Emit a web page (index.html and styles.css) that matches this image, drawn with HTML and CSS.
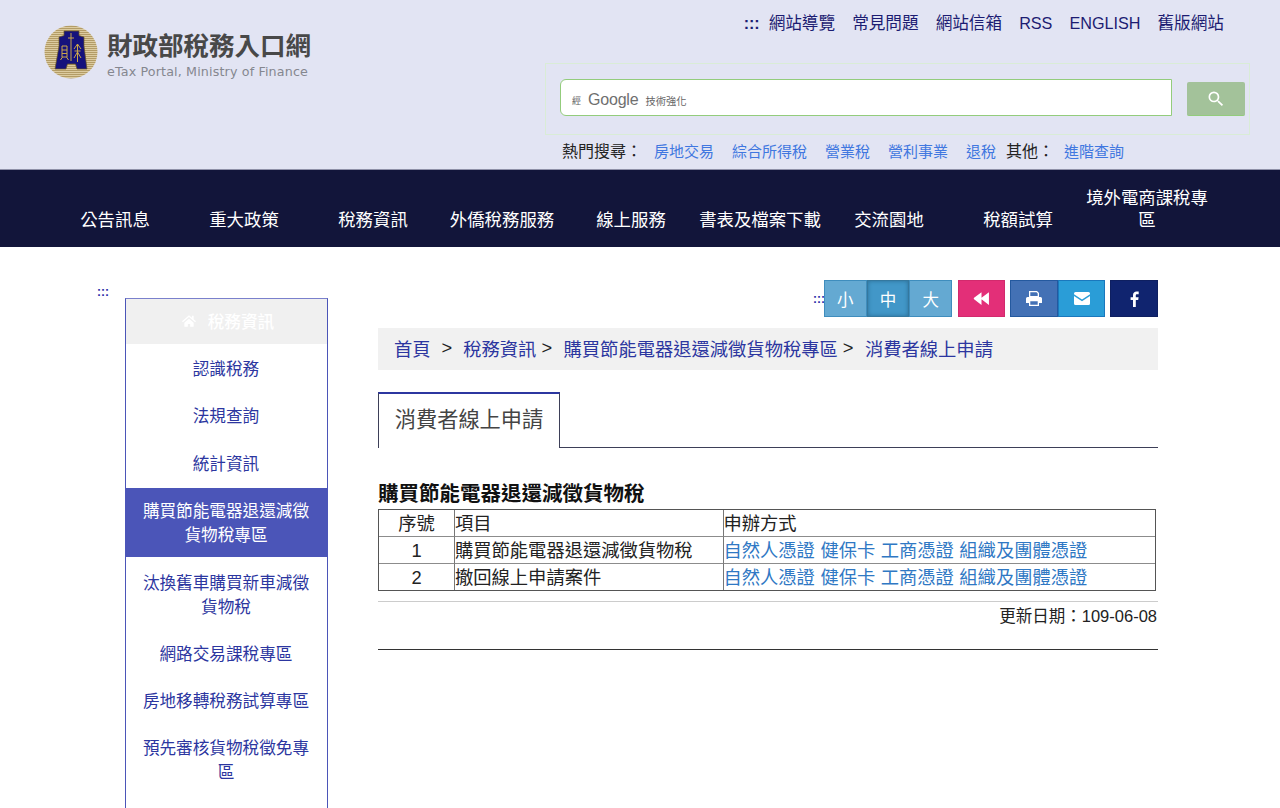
FILE: index.html
```html
<!DOCTYPE html>
<html lang="zh-Hant">
<head>
<meta charset="utf-8">
<title>消費者線上申請</title>
<link rel="stylesheet" href="styles.css">
</head>
<body>
<header class="header">
  <a class="logo" href="#">
    <svg class="seal" viewBox="0 0 54 54" width="54" height="54" aria-hidden="true">
      <defs>
        <pattern id="stripes" width="2" height="2" patternUnits="userSpaceOnUse">
          <rect width="2" height="1" fill="#dccb9f"/><rect y="1" width="2" height="1" fill="#b39c66"/>
        </pattern>
      </defs>
      <circle cx="27" cy="27" r="26.5" fill="url(#stripes)"/>
      <path d="M20 6H35V10.500L38 11.500 40 12V21L43 44H33L31.500 39H23.500L22 44H11L15 21V12L20 10.500Z" fill="#15127c" stroke="#6e5a24" stroke-width=".7"/>
      <path d="M27 8V36M24 13H30M18 21H23V32H18ZM18 25H23M18 28.500H23M18.500 32L16.500 35M22.500 32L24.500 35M33.500 19V37M33.500 19L30 24M33.500 19L37 24M30.500 26H36.500M33.500 27L30 33M33.500 27L37 33" fill="none" stroke="#cba64a" stroke-width="1"/>
    </svg>
    <span class="logo-text">
      <span class="logo-title">財政部稅務入口網</span>
      <span class="logo-sub">eTax Portal, Ministry of Finance</span>
    </span>
  </a>
  <div class="header-right">
    <nav class="top-links">
      <span class="marker">:::</span>
      <a href="#">網站導覽</a><a href="#">常見問題</a><a href="#">網站信箱</a><a class="latin" href="#">RSS</a><a class="latin" href="#">ENGLISH</a><a href="#">舊版網站</a>
    </nav>
    <form class="search">
      <div class="search-input">
        <span class="by">經</span><span class="google">Google</span><span class="by wide">技術強化</span>
      </div>
      <button class="search-btn" type="button" aria-label="搜尋">
        <svg viewBox="0 0 24 24" width="20" height="20"><path fill="#fff" d="M15.500 14h-.79l-.28-.27A6.470 6.470 0 0 0 16 9.500 6.500 6.500 0 1 0 9.500 16c1.610 0 3.090-.59 4.230-1.570l.27.28v.79l5 4.990L20.490 19l-4.990-5zm-6 0C7.010 14 5 11.990 5 9.500S7.010 5 9.500 5 14 7.010 14 9.500 11.990 14 9.500 14z"/></svg>
      </button>
    </form>
    <div class="hot">
      <span class="hot-label">熱門搜尋：</span>
      <a href="#">房地交易</a><a href="#">綜合所得稅</a><a href="#">營業稅</a><a href="#">營利事業</a><a href="#">退稅</a>
      <span class="hot-label other">其他：</span>
      <a href="#">進階查詢</a>
    </div>
  </div>
</header>

<nav class="main-nav">
  <a href="#">公告訊息</a><a href="#">重大政策</a><a href="#">稅務資訊</a><a href="#">外僑稅務服務</a><a href="#">線上服務</a><a href="#">書表及檔案下載</a><a href="#">交流園地</a><a href="#">稅額試算</a><a href="#">境外電商課稅專區</a>
</nav>

<main class="page">
  <span class="side-marker">:::</span>
  <aside class="sidebar">
    <h2 class="side-title">
      <svg viewBox="0 0 24 20" width="14" height="12" aria-hidden="true"><path fill="#fff" d="M12 0 0 10.500l1.500 1.700L12 3l10.500 9.200 1.500-1.700-4-3.500V1h-3v3.400zM4 13v7h6v-5h4v5h6v-7l-8-7z"/></svg>
      稅務資訊
    </h2>
    <a href="#">認識稅務</a>
    <a href="#">法規查詢</a>
    <a href="#">統計資訊</a>
    <a href="#" class="active">購買節能電器退還減徵貨物稅專區</a>
    <a href="#">汰換舊車購買新車減徵貨物稅</a>
    <a href="#">網路交易課稅專區</a>
    <a href="#">房地移轉稅務試算專區</a>
    <a href="#">預先審核貨物稅徵免專區</a>
  </aside>

  <section class="content">
    <div class="tools">
      <span class="tools-marker">:::</span>
      <div class="btn-group">
        <button class="tool size" type="button">小</button><button class="tool size on" type="button">中</button><button class="tool size" type="button">大</button>
      </div>
      <button class="tool back" type="button" aria-label="回上頁">
        <svg viewBox="0 0 16 14" width="17" height="15"><path fill="#fff" d="M8 1v12L1 7.600a.8.8 0 0 1 0-1.200zM15 1v12L8 7.600a.8.8 0 0 1 0-1.200z"/></svg>
      </button>
      <div class="btn-group">
        <button class="tool print" type="button" aria-label="列印">
          <svg viewBox="0 0 16 15" width="16" height="15"><path fill="#fff" fill-rule="evenodd" d="M3 0h8l2 2v4H3zM4.300 1.300v3.600h7.400V2.600l-1.200-1.300zM1.500 6h13A1.500 1.500 0 0 1 16 7.500V12h-3v3H3v-3H0V7.500A1.500 1.500 0 0 1 1.500 6zM4.300 10.300v3.500h7.400v-3.500z"/></svg>
        </button><button class="tool mail" type="button" aria-label="寄信">
          <svg viewBox="0 0 16 13" width="16" height="13"><path fill="#fff" d="M1.500 0h13A1.500 1.500 0 0 1 16 1.500v.8L8 7.500 0 2.300v-.8A1.500 1.500 0 0 1 1.500 0zM0 4l8 5.200L16 4v7.500a1.500 1.500 0 0 1-1.500 1.500h-13A1.500 1.500 0 0 1 0 11.500z"/></svg>
        </button>
      </div>
      <button class="tool fb" type="button" aria-label="Facebook">
        <svg viewBox="0 0 9 16" width="9" height="16"><path fill="#fff" d="M5.800 16V9h2.400l.4-2.800H5.800V4.500c0-.8.200-1.300 1.400-1.300h1.500V.6C8.400.6 7.600.5 6.600.5 4.500.5 3 1.800 3 4.200v2H.6V9H3v7z"/></svg>
      </button>
    </div>

    <nav class="crumbs">
      <a href="#">首頁</a><span class="sep first">&gt;</span><a href="#">稅務資訊</a><span class="sep">&gt;</span><a href="#">購買節能電器退還減徵貨物稅專區</a><span class="sep">&gt;</span><a href="#">消費者線上申請</a>
    </nav>

    <div class="tabs"><h1 class="tab">消費者線上申請</h1></div>

    <h3 class="doc-title">購買節能電器退還減徵貨物稅</h3>
    <table class="doc-table">
      <colgroup><col class="c1"><col class="c2"><col class="c3"></colgroup>
      <tr><td class="num">序號</td><td>項目</td><td>申辦方式</td></tr>
      <tr><td class="num">1</td><td>購買節能電器退還減徵貨物稅</td><td class="ways"><a href="#">自然人憑證</a> <a href="#">健保卡</a> <a href="#">工商憑證</a> <a href="#">組織及團體憑證</a></td></tr>
      <tr><td class="num">2</td><td>撤回線上申請案件</td><td class="ways"><a href="#">自然人憑證</a> <a href="#">健保卡</a> <a href="#">工商憑證</a> <a href="#">組織及團體憑證</a></td></tr>
    </table>
    <p class="updated">更新日期：109-06-08</p>
  </section>
</main>
</body>
</html>
```

FILE: styles.css
```css
* { box-sizing: border-box; }
html, body { margin: 0; height: 808px; overflow: hidden; }
body {
  background: #fff;
  color: #222;
  font-family: "Liberation Sans", "Noto Sans CJK TC", sans-serif;
}
a { text-decoration: none; color: inherit; }
h1, h2, h3, p { margin: 0; font: inherit; }

.header {
  height: 170px;
  background: #e2e4f3;
  display: flex;
  justify-content: space-between;
  border-bottom: 1px solid #8f91a8;
}
.logo { display: flex; align-items: flex-start; gap: 9px; margin: 25px 0 0 44px; height: 55px; }
.logo-text { display: flex; flex-direction: column; margin-top: 6px; }
.logo-title { font-size: 25.500px; line-height: 30px; font-weight: 700; color: #484848; white-space: nowrap; }
.logo-sub { font-family: "DejaVu Sans", sans-serif; font-size: 12.700px; line-height: 15px; margin-top: 3px; color: #85878f; letter-spacing: .14px; white-space: nowrap; }

.header-right { width: 720px; display: flex; flex-direction: column; }
.top-links {
  display: flex; justify-content: flex-end; align-items: center; gap: 17px;
  color: #1c1c72; font-size: 16.640px; line-height: 24px;
  margin: 12px 56px 0 0;
}
.top-links .latin { font-size: 16.200px; margin-top: -2px; }
.marker { margin-right: -8px; font-size: 16px; font-weight: 700; }
.search {
  display: flex; align-items: flex-end; gap: 15px;
  width: 705px; height: 72px;
  margin: 27px 0 0 -15px;
  padding: 15px 0 18px 14px;
  border: 1px solid #d9ecd6;
}
.search-input {
  width: 612px; height: 37px; flex: none;
  background: #fff;
  border: 1px solid #93cc7c;
  border-radius: 6px 0 0 6px;
  display: flex; align-items: center; gap: 7px;
  padding: 5px 0 0 11px;
  color: #666;
}
.by { font-size: 9px; }
.by.wide { font-size: 10.300px; }
.google { font-size: 16px; color: #6f6f6f; letter-spacing: -.2px; }
.search-btn {
  width: 58px; height: 34px; padding: 0; flex: none;
  background: #a3c29a;
  border: 0; border-bottom: 1px solid #93cc7c;
  border-radius: 2px;
  display: flex; align-items: center; justify-content: center;
}
.hot {
  display: flex; align-items: center; gap: 18px;
  font-size: 15px; line-height: 22px; color: #4077e0;
  margin: 6px 0 0 2px;
}
.hot-label { color: #222; font-size: 16px; margin-right: -6px; }
.hot-label.other { margin-left: -8px; margin-right: -8px; }

.main-nav {
  height: 77px;
  background: #12153a;
  display: grid;
  grid-template-columns: repeat(9, 129px);
  padding: 0 0 16px 50.500px;
  align-items: end;
}
.main-nav a {
  color: #fff; font-size: 17.400px; line-height: 22px; text-align: center; padding: 0 3px;
}

.page { position: relative; display: flex; padding: 33px 0 0 125px; gap: 50px; align-items: flex-start; }
.side-marker { position: absolute; left: 97px; top: 38px; color: #2a2fa8; font-size: 12px; line-height: 14px; font-weight: 700; }

.sidebar {
  width: 203px; flex: none; min-height: 520px;
  margin-top: 18px;
  border: 1px solid #4b55b8;
  border-top-color: #7a80cc;
  border-bottom: 0;
  display: flex; flex-direction: column;
}
.side-title {
  height: 45px; background: #f0f0f0; color: #fff; font-size: 16.640px; font-weight: 500;
  padding: 0 0 2px 3px;
  display: flex; align-items: center; justify-content: center; gap: 12px;
}
.sidebar a {
  padding: 14px 17px 9.300px 16px; font-size: 16.640px; line-height: 24px; text-align: center; color: #2c36a0;
}
.sidebar a.active { background: #4b55b8; color: #fff; margin-top: 2px; padding-top: 12.500px; padding-bottom: 8.500px; }
.sidebar a.active ~ a { padding-bottom: 9px; }
.sidebar a.active + a { padding-top: 15px; }

.content { width: 780px; flex: none; }
.tools { display: flex; justify-content: flex-end; align-items: center; gap: 5px; height: 37px; }
.tools-marker { color: #2a2fa8; font-size: 12px; font-weight: 700; margin-right: -6px; }
.btn-group { display: flex; }
.tool {
  width: 42.670px; height: 37px; padding: 0;
  display: flex; align-items: center; justify-content: center;
  color: #fff; font-size: 16.500px;
  border: 1px solid #3f8dbd;
  font-family: inherit;
}
.size { background: #64a9d2; }
.size.on { background: #4297c8; border-color: #34789f; box-shadow: inset 0 0 4px #2c6f97; }
.back { width: 47px; margin-left: 1px; background: #e32f78; border-color: #d22a6d; }
.print { width: 48px; background: #4371b5; border-color: #24599f; }
.mail { width: 47px; background: #2a9dd7; border-color: #1a78bd; }
.fb { width: 48px; background: #10246f; border-color: #0e1f60; }

.crumbs {
  margin-top: 11px; height: 42px; background: #f1f1f1;
  padding: 0 0 2px 16px; display: flex; align-items: center;
  font-size: 18.300px; color: #2c36a0;
}
.crumbs .sep { color: #222; margin: 0 11.500px 0 5px; }
.crumbs .sep.first { margin: 0 11px; }

.tabs { margin-top: 22px; border-bottom: 1px solid #3d3f58; height: 56px; }
.tab {
  display: block; width: 182px; height: 56px;
  background: #fff;
  border: 1px solid #3d3f58; border-top: 2px solid #2c36a0; border-bottom: 0;
  text-align: center; font-size: 21.200px; line-height: 51px; color: #444;
}

.doc-title { margin-top: 34px; font-size: 20.500px; line-height: 24px; font-weight: 700; color: #111; }
.doc-table {
  border-collapse: separate; border-spacing: 0;
  border: 1px solid #555;
  width: 778px; margin-top: 3px; table-layout: fixed;
  font-size: 18.300px; color: #222;
}
.c1 { width: 75px; } .c2 { width: 268.500px; }
.doc-table td {
  border-top: 1px solid #8c8c8c; border-left: 1px solid #777;
  padding: 0; height: 27px; line-height: 25px; white-space: nowrap;
}
.doc-table tr:first-child td { border-top: 0; height: 26px; }
.doc-table td:first-child { border-left: 0; }
.doc-table .num { text-align: center; }
.ways { word-spacing: .4px; }
.ways a { color: #2f78c4; }
.updated {
  margin-top: 10px; border-top: 1px solid #ccc; padding: 2px 1px 0 0; height: 49px;
  text-align: right; font-size: 16.500px; line-height: 24px; color: #222;
  border-bottom: 1px solid #333;
}
```
